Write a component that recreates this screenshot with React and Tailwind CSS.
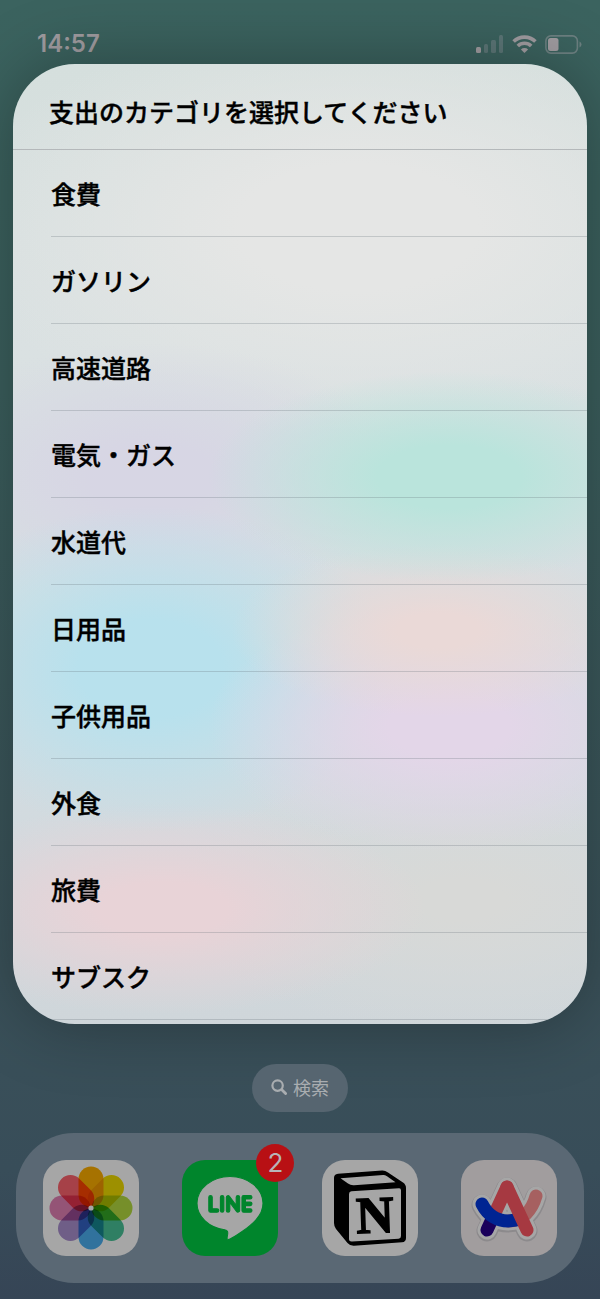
import React from "react";
import { SiLine } from "react-icons/si";

const categories = [
  "食費",
  "ガソリン",
  "高速道路",
  "電気・ガス",
  "水道代",
  "日用品",
  "子供用品",
  "外食",
  "旅費",
  "サブスク",
];

const petals = [
  "#ffb000",
  "#f2de00",
  "#b6dc40",
  "#48c398",
  "#4cb0f2",
  "#ab90d0",
  "#e482b6",
  "#ff646e",
];

function StatusBar() {
  return (
    <header className="flex h-16 items-start justify-between pt-[30px] pr-[18px] pl-[37px] text-[#a09ca0]">
      <time className="font-['Inter',sans-serif] text-[24px] leading-7 font-semibold">14:57</time>
      <div className="flex h-7 items-center gap-2">
        <svg width="28" height="18" viewBox="0 0 28 18" aria-hidden="true">
          <rect x="0" y="12" width="5" height="6" rx="1.5" fill="currentColor" />
          <g fill="#5c7677">
            <rect x="8" y="9" width="4" height="9" rx="1.5" />
            <rect x="15" y="5" width="5" height="13" rx="1.5" />
            <rect x="23" y="0" width="4" height="18" rx="1.5" />
          </g>
        </svg>
        <svg width="25" height="18" viewBox="0 0 25 18" fill="none" stroke="currentColor" strokeWidth="3.6" aria-hidden="true">
          <path d="M1.6 6.6a15.4 15.4 0 0 1 21.8 0" />
          <path d="M5.8 11a9.5 9.5 0 0 1 13.4 0" />
          <path d="M12.5 18 8.9 14.4a5.1 5.1 0 0 1 7.2 0z" fill="currentColor" stroke="none" />
        </svg>
        <svg width="37" height="19" viewBox="0 0 37 19" aria-hidden="true">
          <rect x="0.9" y="0.9" width="31.5" height="17.2" rx="5" fill="none" stroke="#6c8081" strokeWidth="1.6" />
          <rect x="3" y="3" width="10.5" height="13" rx="2.5" fill="currentColor" />
          <path d="M34.5 6.5q2 1 2 3t-2 3z" fill="#6c8081" />
        </svg>
      </div>
    </header>
  );
}

function PhotosIcon() {
  return (
    <svg viewBox="0 0 96 96" className="isolate size-24" aria-hidden="true">
      <rect width="96" height="96" fill="#fff" />
      {petals.map((color, i) => (
        <rect
          key={color}
          x="35.5"
          y="6.5"
          width="25"
          height="41"
          rx="12.5"
          fill={color}
          transform={`rotate(${i * 45} 48 48)`}
          className="mix-blend-multiply"
        />
      ))}
      <circle cx="48" cy="48" r="2.6" fill="#fff" />
    </svg>
  );
}

function LineIcon() {
  return (
    <span className="flex size-24 items-center justify-center bg-[#00cc44]">
      <SiLine className="size-[66px] overflow-visible stroke-[#00cc44] stroke-[0.4px] text-white" aria-hidden="true" />
    </span>
  );
}

function NotionIcon() {
  return (
    <svg viewBox="0 0 96 96" className="size-24" aria-hidden="true">
      <rect width="96" height="96" fill="#fff" />
      <path d="M12 18Q12 14 16 13.700L60 10.600Q63 10.400 66 12.400L81 22.500Q84 24.500 84 28V78Q84 82 80 82.300L32 85.800Q28 86 25.500 83L14 69Q12 66.500 12 63Z" />
      <path d="M18.500 18.200 61 15.100Q63 15 65 16.300L73.500 22.200 32 25.200Q28.500 25.400 26 23.500Z" fill="#fff" />
      <path d="M27 34Q27 31.500 29.500 31.300L77 28.200Q79 28.100 79 30.300V76Q79 78.500 76.500 78.700L30 81.500Q27 81.700 27 79Z" fill="#fff" />
      <text
        x="53"
        y="72.500"
        textAnchor="middle"
        className="font-['Liberation_Serif',serif] text-[52px] font-bold"
        stroke="#000"
        strokeWidth="1.600"
        transform="rotate(-2 53 55)"
      >
        N
      </text>
    </svg>
  );
}

function ArcIcon() {
  return (
    <svg viewBox="0 0 96 96" className="size-24" fill="none" strokeLinecap="round" strokeLinejoin="round" aria-hidden="true">
      <rect width="96" height="96" fill="#f7f1f3" />
      <g stroke="#d8d4d8" strokeWidth="21" transform="translate(0 1)">
        <path d="M26 70 46 27 66 70" />
        <path d="M21 44C27 56 37 61 47 61C62 61 71 50 75 36" />
      </g>
      <g stroke="#fff" strokeWidth="19">
        <path d="M26 70 46 27 66 70" />
        <path d="M21 44C27 56 37 61 47 61C62 61 71 50 75 36" />
      </g>
      <g strokeWidth="13">
        <path d="M47 61C62 61 71 50 75 36" stroke="#ff9494" />
        <path d="M26 70 32 57" stroke="#28008c" />
        <path d="M34 53 46 27" stroke="#ff5864" />
        <path d="M21 44C27 56 37 61 47 61L55 60" stroke="#0038e0" />
        <path d="M46 27 66 70" stroke="#ff5864" />
      </g>
    </svg>
  );
}

const dockApps = [
  { name: "写真", Icon: PhotosIcon },
  { name: "LINE", Icon: LineIcon, badge: 2 },
  { name: "Notion", Icon: NotionIcon },
  { name: "Arc", Icon: ArcIcon },
];

function Dock() {
  return (
    <nav className="mx-4 mt-[21px] mb-4 flex h-[150px] items-center justify-between rounded-[58px] bg-[#5a6874] px-[27px]">
      {dockApps.map(({ name, Icon, badge }) => (
        <button key={name} type="button" aria-label={name} className="relative size-24">
          <span className="block overflow-hidden rounded-[23px] brightness-65">
            <Icon />
          </span>
          {badge && (
            <span className="absolute -top-4 -right-4 flex size-[38px] items-center justify-center rounded-full bg-[#b81014] font-['Inter',sans-serif] text-[26px] leading-none text-[#b8b4b8]">
              {badge}
            </span>
          )}
        </button>
      ))}
    </nav>
  );
}

export default function App() {
  return (
    <div className="flex min-h-screen flex-col bg-[linear-gradient(180deg,#3b635f_0%,#3b5f5d_30%,#3a5159_75%,#384d59_90%,#364556_100%)] font-['Noto_Sans_CJK_JP',sans-serif]">
      <StatusBar />
      <main
        aria-labelledby="sheet-title"
        className="mx-[13px] overflow-hidden rounded-[62px] bg-[radial-gradient(ellipse_42%_11%_at_76%_43%,#bae4dc_30%,#bae4dc00_100%),radial-gradient(ellipse_36%_9%_at_74%_59%,#ead9d7_20%,#ead9d700_100%),radial-gradient(ellipse_42%_13%_at_76%_69%,#e3d6e8_25%,#e3d6e800_100%),radial-gradient(ellipse_42%_17%_at_24%_63%,#b8e1ed_30%,#b8e1ed00_100%),radial-gradient(ellipse_44%_14%_at_24%_43%,#d7d6e4_25%,#d7d6e400_100%),radial-gradient(ellipse_46%_11%_at_26%_88%,#e8d3d7_25%,#e8d3d700_100%),radial-gradient(ellipse_50%_14%_at_78%_87%,#d8d9d7_15%,#d8d9d700_100%),radial-gradient(ellipse_70%_22%_at_60%_17%,#e5e6e5_30%,#e5e6e500_100%),linear-gradient(180deg,#d5dfdd_0%,#dae1e2_30%,#d3dce1_70%,#cfd6da_100%)] shadow-[0_0_70px_#00000050]"
      >
        <h1 id="sheet-title" className="flex h-[86px] items-center border-b border-[#b4b8ba] px-9 pt-2 text-[25px] leading-9 font-medium text-black [-webkit-text-stroke:0.4px]">
          支出のカテゴリを選択してください
        </h1>
        <ul className="pb-1">
          {categories.map((category) => (
            <li key={category} className="pl-[38px]">
              <button
                type="button"
                className="flex h-[87px] w-full items-center border-b border-[#5b667040] text-left text-[25px] leading-9 font-medium text-black [-webkit-text-stroke:0.4px]"
              >
                {category}
              </button>
            </li>
          ))}
        </ul>
      </main>
      <button
        type="button"
        className="mx-auto mt-10 flex h-12 w-24 items-center justify-center gap-1.5 rounded-full bg-[#566570] pb-0.5 text-[18px] leading-6 text-[#a9adb0]"
      >
        <svg width="16" height="16" viewBox="0 0 16 16" fill="none" stroke="currentColor" strokeWidth="2.2" strokeLinecap="round" aria-hidden="true">
          <circle cx="6.6" cy="6.6" r="5.2" />
          <path d="m10.8 10.8 3.8 3.8" strokeWidth="2.8" />
        </svg>
        検索
      </button>
      <Dock />
    </div>
  );
}
